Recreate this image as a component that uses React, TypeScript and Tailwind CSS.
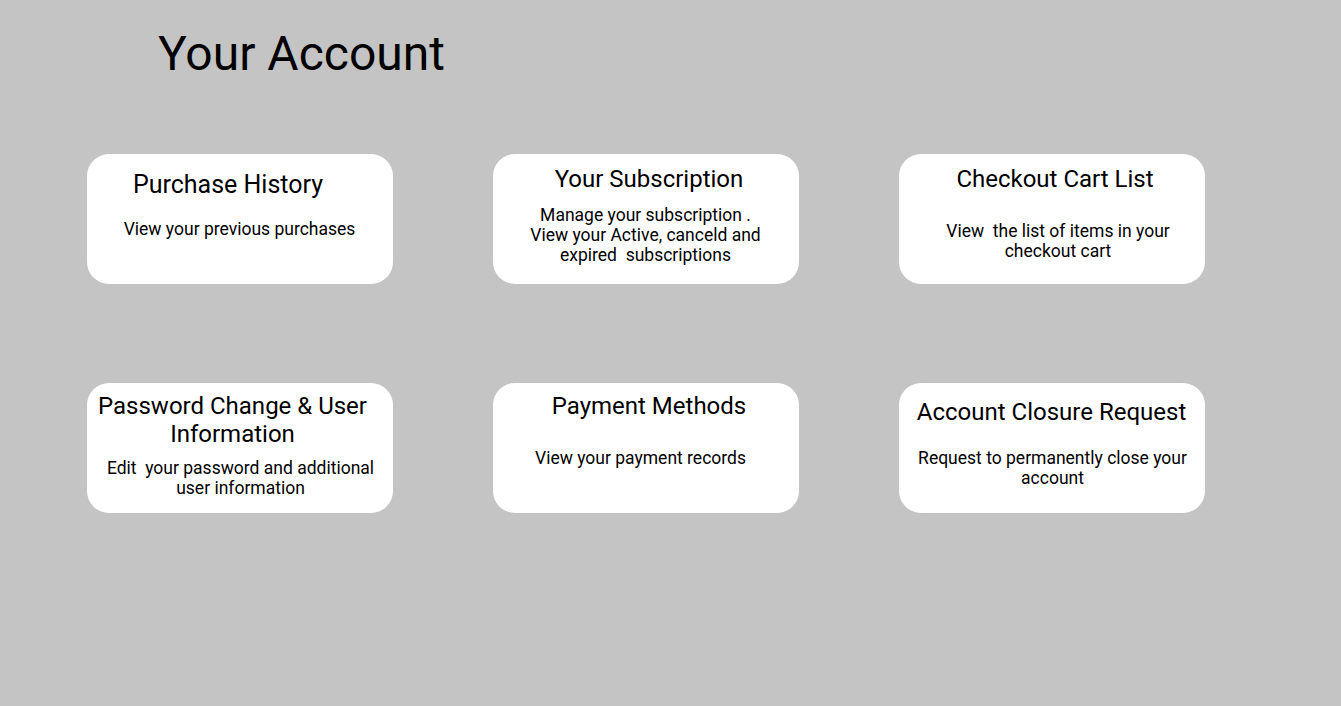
import React from "react";

type Card = {
  title: React.ReactNode;
  desc: React.ReactNode;
  cardPad: string;
  titleCls: string;
  descCls: string;
};

const cards: Card[] = [
  {
    title: "Purchase History",
    desc: "View your previous purchases",
    cardPad: "pt-[17px]",
    titleCls: "text-[25px] pr-[24px]",
    descCls: "mt-[20px] pr-[1px]",
  },
  {
    title: "Your Subscription",
    desc: (
      <>
        Manage your subscription .<br />
        View your Active, canceld and<br />
        expired  subscriptions
      </>
    ),
    cardPad: "pt-[11px]",
    titleCls: "text-[24px] pl-[6px]",
    descCls: "mt-[12px] pr-[1px]",
  },
  {
    title: "Checkout Cart List",
    desc: (
      <>
        View  the list of items in your
        <br />
        checkout cart
      </>
    ),
    cardPad: "pt-[11px]",
    titleCls: "text-[24px] pl-[6px]",
    descCls: "mt-[28px] pl-[12px]",
  },
  {
    title: (
      <>
        Password Change &amp; User
        <br />
        Information
      </>
    ),
    desc: (
      <>
        Edit  your password and additional
        <br />
        user information
      </>
    ),
    cardPad: "pt-[9px]",
    titleCls: "text-[24px] pr-[15px]",
    descCls: "mt-[10px] pl-[1px]",
  },
  {
    title: "Payment Methods",
    desc: "View your payment records",
    cardPad: "pt-[9px]",
    titleCls: "text-[24px] pl-[6px]",
    descCls: "mt-[28px] pr-[11px]",
  },
  {
    title: "Account Closure Request",
    desc: (
      <>
        Request to permanently close your
        <br />
        account
      </>
    ),
    cardPad: "pt-[15px]",
    titleCls: "text-[24px] pr-[1px]",
    descCls: "mt-[22px] pl-[1px]",
  },
];

export default function App() {
  return (
    <div
      className="w-full h-[706px] bg-[#c4c4c4] text-black overflow-hidden"
      style={{ fontFamily: "Roboto, 'Noto Sans', sans-serif" }}
    >
      <h1 className="pt-[26px] pl-[158px] text-[48px] leading-[56px] font-normal">
        Your Account
      </h1>
      <div className="mt-[72px] ml-[87px] grid grid-cols-[306px_306px_306px] gap-x-[100px] gap-y-[99px]">
        {cards.map((c, i) => (
          <div
            key={i}
            className={`h-[130px] bg-white rounded-[22px] flex flex-col ${c.cardPad}`}
          >
            <div
              className={`leading-[28px] text-center whitespace-pre-wrap ${c.titleCls}`}
            >
              {c.title}
            </div>
            <div
              className={`text-[17.5px] leading-[20px] text-center whitespace-pre-wrap ${c.descCls}`}
            >
              {c.desc}
            </div>
          </div>
        ))}
      </div>
    </div>
  );
}
